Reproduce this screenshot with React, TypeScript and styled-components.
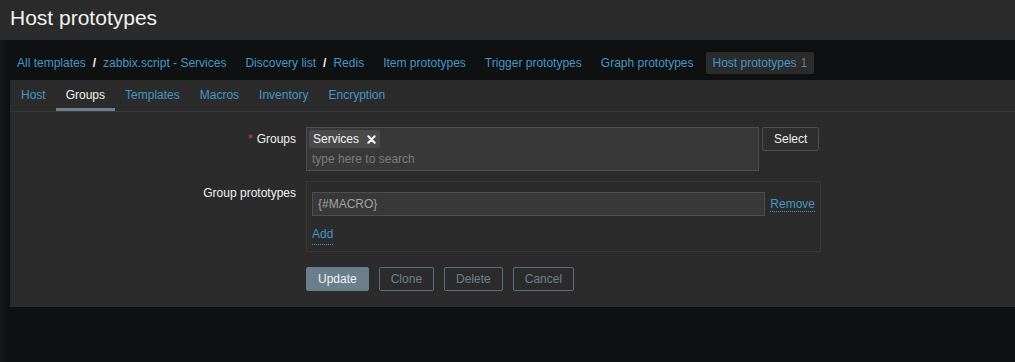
import styled, { createGlobalStyle } from 'styled-components';

const GlobalStyle = createGlobalStyle`
  html, body {
    margin: 0;
    padding: 0;
  }
  body {
    background: #0e1012;
    background-image: linear-gradient(to right, #17181a 0, #0e1012 9px);
    color: #f2f2f2;
    font-family: "Liberation Sans", Arial, sans-serif;
    font-size: 12px;
    width: 1015px;
    height: 362px;
    overflow: hidden;
  }
`

const Header = styled.header`
  height: 40px;
  background: #2b2b2b;
  display: flex;
  align-items: center;
  padding-left: 10px;
`
const Title = styled.h1`
  margin: 0;
  font-size: 21px;
  font-weight: normal;
  color: #f2f2f2;
  line-height: 24px;
  padding-bottom: 4px;
`
const Nav = styled.nav`
  display: flex;
  align-items: center;
  gap: 5px;
  padding: 12px 0 6px 10px;
`
const Crumbs = styled.div`
  display: flex;
  align-items: center;
`
const Crumb = styled.a<{ selected?: boolean }>`
  display: block;
  height: 22px;
  line-height: 22px;
  padding: 0 7px;
  color: #4796c4;
  text-decoration: none;
  background: ${props => props.selected ? "#2b2b2b" : "transparent"};
  border-radius: 2px;
`
const Count = styled.span`
  color: #7a7a7a;
  margin-left: 4px;
`
const Sep = styled.span`
  color: #f2f2f2;
  font-weight: bold;
`
const Panel = styled.main`
  margin-left: 10px;
  background: #2b2b2b;
  padding-bottom: 16px;
`
const Tabs = styled.ul`
  display: flex;
  list-style: none;
  margin: 0;
  padding: 0 0 0 1px;
  height: 31px;
  border-bottom: 1px solid #3a3a3a;
`
const Tab = styled.li<{ active?: boolean }>`
  padding: 0 10px;
  line-height: 31px;
  height: 28px;
  color: ${props => props.active ? "#f2f2f2" : "#4796c4"};
  border-bottom: 3px solid ${props => props.active ? "#6a8190" : "transparent"};
  cursor: pointer;
`
const Form = styled.div`
  display: grid;
  grid-template-columns: 286px auto;
  column-gap: 10px;
  row-gap: 10px;
  padding-top: 15px;
  align-items: start;
`
const Label = styled.label`
  text-align: right;
  line-height: 24px;
  color: #f2f2f2;
`
const Required = styled.span`
  color: #e33734;
  margin-right: 4px;
`
const FieldRow = styled.div`
  display: flex;
  align-items: flex-start;
  gap: 3px;
`
const MultiSelect = styled.div`
  width: 451px;
  height: 42px;
  background: #383838;
  border: 1px solid #4f4f4f;
  display: flex;
  flex-direction: column;
`
const Chips = styled.div`
  display: flex;
  padding: 2px 2px 0;
`
const Chip = styled.span`
  display: flex;
  align-items: center;
  height: 18px;
  padding: 0 4px;
  background: #4a4a4a;
  border-radius: 2px;
  color: #f2f2f2;
  gap: 8px;
`
const ChipRemove = styled.svg`
  width: 9px;
  height: 9px;
`
const Search = styled.div`
  color: #7d7d7d;
  padding: 4px 5px 0;
  line-height: 14px;
`
const GreyButton = styled.button`
  height: 24px;
  padding: 0 11px;
  background: #2e2e2e;
  border: 1px solid #4f4f4f;
  border-radius: 2px;
  color: #f2f2f2;
  font-family: inherit;
  font-size: 12px;
`
const ProtoBox = styled.div`
  width: 503px;
  border: 1px solid #383838;
  padding: 10px 5px 6px;
`
const ProtoRow = styled.div`
  display: flex;
  align-items: center;
  gap: 5px;
`
const TextInput = styled.div`
  width: 443px;
  height: 22px;
  line-height: 22px;
  padding: 0 5px;
  background: #383838;
  border: 1px solid #4f4f4f;
  color: #a3a3a3;
`
const LinkAction = styled.a`
  color: #4796c4;
  text-decoration: none;
  border-bottom: 1px dotted #4796c4;
  line-height: 14px;
  cursor: pointer;
`
const AddRow = styled.div`
  padding-top: 11px;
  line-height: 14px;
  display: flex;
  height: 18px;
`
const Actions = styled.div`
  display: flex;
  gap: 10px;
  padding-top: 5px;
`
const ActionButton = styled.button<{ primary?: boolean }>`
  height: 24px;
  padding: 0 11px;
  border-radius: 2px;
  font-family: inherit;
  font-size: 12px;
  background: ${props => props.primary ? "#6a7f8b" : "transparent"};
  border: 1px solid ${props => props.primary ? "#6a7f8b" : "#5a6f7b"};
  color: ${props => props.primary ? "#eef2f5" : "#6a8290"};
`

const crumbs = [
  ["All templates", "zabbix.script - Services"],
  ["Discovery list", "Redis"],
  ["Item prototypes"],
  ["Trigger prototypes"],
  ["Graph prototypes"],
]
const tabs = ["Host", "Groups", "Templates", "Macros", "Inventory", "Encryption"]

const App = () => {
  return (
    <>
      <GlobalStyle />
      <Header>
        <Title>Host prototypes</Title>
      </Header>
      <Nav>
        {crumbs.map((group, i) => (
          <Crumbs key={i}>
            {group.map((c, j) => (
              <Crumbs key={c}>
                {j > 0 && <Sep>/</Sep>}
                <Crumb>{c}</Crumb>
              </Crumbs>
            ))}
          </Crumbs>
        ))}
        <Crumb selected>Host prototypes<Count>1</Count></Crumb>
      </Nav>
      <Panel>
        <Tabs>
          {tabs.map(t => <Tab key={t} active={t === "Groups"}>{t}</Tab>)}
        </Tabs>
        <Form>
          <Label><Required>*</Required>Groups</Label>
          <FieldRow>
            <MultiSelect>
              <Chips>
                <Chip>
                  Services
                  <ChipRemove viewBox="0 0 10 10">
                    <path d="M1.5 1.5 L8.5 8.5 M8.5 1.5 L1.5 8.5" stroke="#f2f2f2" strokeWidth="2.4" strokeLinecap="round" />
                  </ChipRemove>
                </Chip>
              </Chips>
              <Search>type here to search</Search>
            </MultiSelect>
            <GreyButton>Select</GreyButton>
          </FieldRow>
          <Label>Group prototypes</Label>
          <ProtoBox>
            <ProtoRow>
              <TextInput>{'{#MACRO}'}</TextInput>
              <LinkAction>Remove</LinkAction>
            </ProtoRow>
            <AddRow><LinkAction>Add</LinkAction></AddRow>
          </ProtoBox>
          <span />
          <Actions>
            <ActionButton primary>Update</ActionButton>
            <ActionButton>Clone</ActionButton>
            <ActionButton>Delete</ActionButton>
            <ActionButton>Cancel</ActionButton>
          </Actions>
        </Form>
      </Panel>
    </>
  )
}

export default App;
